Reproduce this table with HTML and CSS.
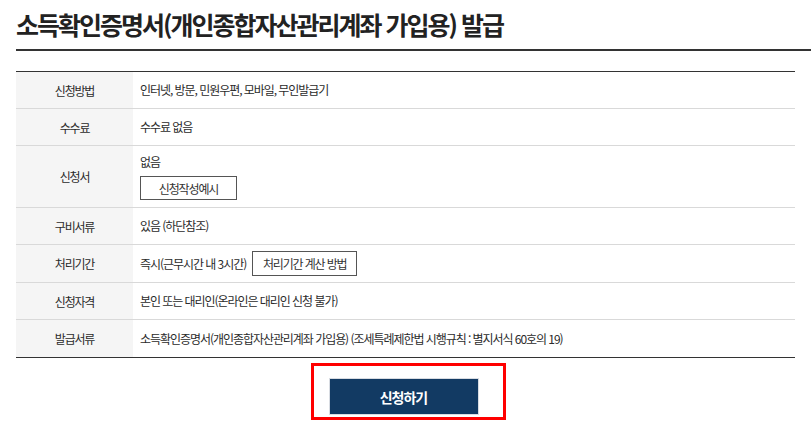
FILE: index.html
```html
<!DOCTYPE html>
<html lang="ko">
<head>
<meta charset="utf-8">
<title>소득확인증명서 발급</title>
<link rel="stylesheet" href="styles.css">
</head>
<body>
<div class="page">
  <h1 class="title">소득확인증명서(개인종합자산관리계좌 가입용) 발급</h1>
  <div class="info">
    <div class="row">
      <div class="label">신청방법</div>
      <div class="value">인터넷, 방문, 민원우편, 모바일, 무인발급기</div>
    </div>
    <div class="row">
      <div class="label">수수료</div>
      <div class="value">수수료 없음</div>
    </div>
    <div class="row">
      <div class="label">신청서</div>
      <div class="value stack">
        <span>없음</span>
        <button class="btn btn-example">신청작성예시</button>
      </div>
    </div>
    <div class="row">
      <div class="label">구비서류</div>
      <div class="value">있음 (하단참조)</div>
    </div>
    <div class="row">
      <div class="label">처리기간</div>
      <div class="value inline">
        <span>즉시(근무시간 내 3시간)</span>
        <button class="btn btn-calc">처리기간 계산 방법</button>
      </div>
    </div>
    <div class="row">
      <div class="label">신청자격</div>
      <div class="value">본인 또는 대리인(온라인은 대리인 신청 불가)</div>
    </div>
    <div class="row">
      <div class="label">발급서류</div>
      <div class="value">소득확인증명서(개인종합자산관리계좌 가입용) (조세특례제한법 시행규칙 : 별지서식 60호의 19)</div>
    </div>
  </div>
  <div class="actions">
    <div class="submit-wrap">
      <button class="submit">신청하기</button>
      <span class="highlight"></span>
    </div>
  </div>
</div>
</body>
</html>
```

FILE: styles.css
```css
* { box-sizing: border-box; }
html, body { margin: 0; padding: 0; background: #fff; }
body {
  font-family: "Noto Sans CJK KR", "Noto Sans", sans-serif;
  color: #333;
  width: 811px;
  height: 428px;
  overflow: hidden;
}
.page { padding-left: 16px; }
.title {
  margin: 0;
  padding: 8px 0 9px;
  font-size: 25px;
  line-height: 32px;
  font-weight: 700;
  letter-spacing: -2px;
  color: #222;
  border-bottom: 2px solid #333;
}
.info {
  margin: 20px 16px 0 0;
  border-top: 1px solid #333;
  border-bottom: 1px solid #333;
}
.row {
  display: grid;
  grid-template-columns: 117px 1fr;
  border-bottom: 1px solid #d9d9d9;
}
.row:last-child { border-bottom: none; }
.label {
  background: #f5f5f5;
  display: flex;
  align-items: center;
  justify-content: center;
  font-size: 12px;
  letter-spacing: -1.2px;
  color: #2b2b2b;
}
.value {
  padding: 10px 7px;
  font-size: 12px;
  line-height: 16px;
  letter-spacing: -1.05px;
  min-height: 36px;
  color: #2b2b2b;
}
.row:last-child .value { min-height: 37px; padding-top: 11px; }
.value.stack {
  display: flex;
  flex-direction: column;
  align-items: flex-start;
  gap: 6px;
  padding: 8px 7px 7px;
}
.value.inline {
  display: flex;
  align-items: center;
  gap: 6px;
  padding: 6px 7px;
}
.btn {
  font-family: inherit;
  font-size: 12px;
  letter-spacing: -1.15px;
  color: #333;
  background: #fff;
  border: 1px solid #555;
  height: 25px;
  padding: 0;
  cursor: pointer;
}
.btn-example { width: 97px; height: 24px; }
.btn-calc { width: 105px; }
.actions {
  display: flex;
  justify-content: center;
  margin: 20px 16px 0 0;
}
.submit-wrap { position: relative; margin-left: -4px; }
.submit {
  display: block;
  width: 150px;
  height: 37px;
  background: #123a63;
  border: 1px solid #d8dce2;
  color: #fff;
  font-family: inherit;
  font-size: 14px;
  font-weight: 700;
  letter-spacing: -1px;
  cursor: pointer;
}
.highlight {
  position: absolute;
  left: -18px;
  top: -15px;
  right: -27px;
  bottom: -5px;
  border: 3px solid #ff0000;
  pointer-events: none;
}
```
